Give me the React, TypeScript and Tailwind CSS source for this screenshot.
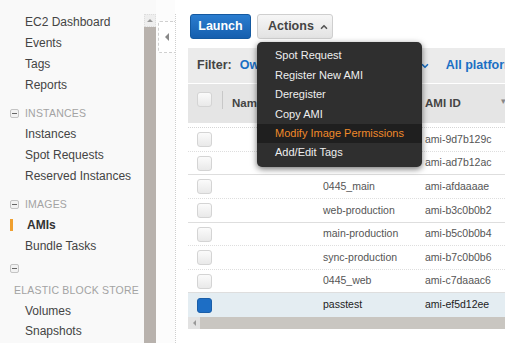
import { ChevronDown, ChevronUp } from "lucide-react"

type Row = {
  name: string
  ami: string
  h: string
  line: string
  selected?: boolean
}

const rows: Row[] = [
  { name: "", ami: "ami-9d7b129c", h: "h-[24px]", line: "border-dotted" },
  { name: "", ami: "ami-ad7b12ac", h: "h-[23px]", line: "border-solid" },
  { name: "0445_main", ami: "ami-afdaaaae", h: "h-[24px]", line: "border-dotted" },
  { name: "web-production", ami: "ami-b3c0b0b2", h: "h-[24px]", line: "border-solid" },
  { name: "main-production", ami: "ami-b5c0b0b4", h: "h-[23px]", line: "border-dotted" },
  { name: "sync-production", ami: "ami-b7c0b0b6", h: "h-[24px]", line: "border-dotted" },
  { name: "0445_web", ami: "ami-c7daaac6", h: "h-[23px]", line: "border-solid" },
  { name: "passtest", ami: "ami-ef5d12ee", h: "h-[24px]", line: "border-none", selected: true },
]

const menu = [
  "Spot Request",
  "Register New AMI",
  "Deregister",
  "Copy AMI",
  "Modify Image Permissions",
  "Add/Edit Tags",
]

const MinusBox = () => (
  <span className="flex h-[9px] w-[9px] items-center justify-center rounded-[2px] border border-[#c4c4c4] bg-[#f2f2f2]">
    <span className="h-px w-[5px] bg-[#666]" />
  </span>
)

const NavItem = ({ label }: { label: string }) => (
  <div className="flex h-[21px] items-center pl-[25px] text-[12px] text-[#444]">{label}</div>
)

const SectionHead = ({ label }: { label: string }) => (
  <div className="flex h-[19px] items-center gap-[6px] pl-[10px] text-[10.5px] tracking-[0.2px] text-[#a3a3a3]">
    <MinusBox />
    {label}
  </div>
)

const Checkbox = ({ checked }: { checked?: boolean }) =>
  checked ? (
    <span className="block h-[15px] w-[15px] rounded-[3px] border border-[#1a5ea8] bg-[#1d6ec5]" />
  ) : (
    <span className="block h-[15px] w-[15px] rounded-[3px] border border-[#d4d4d4] bg-gradient-to-b from-[#fbfbfb] to-[#e9e9e9]" />
  )

export default function App() {
  return (
    <div className="flex h-[343px] w-[505px] overflow-hidden bg-white font-['Liberation_Sans',Arial,sans-serif]">
      {/* sidebar */}
      <div className="flex w-[144px] shrink-0 flex-col bg-[#f9f9f9] pt-[11px]">
        <NavItem label="EC2 Dashboard" />
        <NavItem label="Events" />
        <NavItem label="Tags" />
        <NavItem label="Reports" />
        <div className="mt-[9px]">
          <SectionHead label="INSTANCES" />
        </div>
        <NavItem label="Instances" />
        <NavItem label="Spot Requests" />
        <NavItem label="Reserved Instances" />
        <div className="mt-[9px]">
          <SectionHead label="IMAGES" />
        </div>
        <div className="flex h-[21px] items-center">
          <span className="ml-[10px] h-[12px] w-[3px] bg-[#f0a030]" />
          <span className="pl-[14px] text-[12px] font-bold text-[#333]">AMIs</span>
        </div>
        <NavItem label="Bundle Tasks" />
        <div className="flex h-[24px] items-center pl-[10px]">
          <MinusBox />
        </div>
        <div className="flex h-[21px] items-center pl-[14px] text-[10.5px] tracking-[0.2px] text-[#a3a3a3]">
          ELASTIC BLOCK STORE
        </div>
        <div className="flex h-[20px] items-center pl-[25px] text-[12px] text-[#444]">Volumes</div>
        <div className="flex h-[20px] items-center pl-[25px] text-[12px] text-[#444]">Snapshots</div>
      </div>

      {/* sidebar scrollbar */}
      <div className="flex w-[12px] shrink-0 flex-col bg-[#f9f9f9] pt-[14px]">
        <div className="flex h-[13px] items-center justify-center border border-dotted border-[#ddd] bg-[#eeeeee]">
          <span className="h-0 w-0 border-x-[3px] border-b-[3px] border-x-transparent border-b-[#999]" />
        </div>
        <div className="flex-1 bg-[#b8b2ad]" />
      </div>

      {/* collapse tab */}
      <div className="w-[19px] shrink-0 bg-[#fcfcfc] pl-[2px] pt-[21px]">
        <div className="flex h-[32px] w-[17px] items-center justify-center rounded-l-[2px] border-y border-l border-dashed border-[#d0d0d0] bg-white">
          <span className="h-0 w-0 border-y-[4px] border-r-[4px] border-y-transparent border-r-[#888]" />
        </div>
      </div>

      {/* content */}
      <div className="relative mt-[14px] flex min-w-0 flex-1 flex-col border-l border-dotted border-[#cfcfcf] pl-[12px]">
        <div className="ml-[2px] flex h-[25px] gap-[6px]">
          <button className="w-[61px] rounded-[3px] border border-[#1459a0] bg-gradient-to-b from-[#2a7dd0] to-[#165fae] text-[12.5px] font-bold text-white">
            Launch
          </button>
          <button className="flex w-[76px] items-center gap-[5px] rounded-[3px] border border-[#cfcfcf] bg-gradient-to-b from-[#f6f6f6] to-[#e3e3e3] pl-[10px] text-[12.5px] font-bold text-[#444]">
            Actions
            <ChevronUp className="h-[10px] w-[10px] text-[#555]" strokeWidth={4} />
          </button>
        </div>

        {/* filter bar */}
        <div className="mt-[9px] flex h-[35px] items-center overflow-hidden whitespace-nowrap bg-[#ebebeb] text-[12.5px] font-bold">
          <span className="ml-[9px] shrink-0 text-[#444]">Filter:</span>
          <span className="ml-[8px] w-[17px] shrink-0 overflow-hidden text-[#1a6fc4]">Owned by me</span>
          <ChevronDown className="ml-[163px] h-[10px] w-[10px] shrink-0 text-[#1a6fc4]" strokeWidth={4} />
          <span className="ml-[16px] shrink-0 text-[#1a6fc4]">All platforms</span>
        </div>
        <div className="h-px bg-white" />

        {/* header */}
        <div className="relative flex h-[39px] items-start whitespace-nowrap bg-[#e5e5e5] pt-[8px] text-[11.5px] font-bold text-[#444]">
          <div className="ml-[9px] w-[16px] shrink-0">
            <Checkbox />
          </div>
          <span className="ml-[9px] mt-[-1px] h-[18px] w-px shrink-0 bg-[#c8c8c8]" />
          <span className="ml-[9px] mt-[3px] w-[25px] shrink-0 overflow-hidden">Name</span>
          <span className="ml-[168px] mt-[3px] shrink-0">AMI ID</span>
          <span className="ml-[40px] mt-[3px] shrink-0 text-[9px] font-normal text-[#888]">▾</span>
        </div>
        <div className="h-[5px] border-b border-dotted border-[#d6d6d6] bg-white" />

        {/* rows */}
        {rows.map((row) => (
          <div
            key={row.ami}
            className={`flex ${row.h} items-center whitespace-nowrap border-b ${row.line} border-[#dedede] text-[10.5px] ${
              row.selected ? "bg-[#e4edf2] text-[#222]" : "bg-white text-[#555]"
            }`}
          >
            <div className="ml-[9px] w-[15px] shrink-0">
              <Checkbox checked={row.selected} />
            </div>
            <span className="ml-[111px] w-[102px] shrink-0">{row.name}</span>
            <span>{row.ami}</span>
          </div>
        ))}

        {/* horizontal scrollbar */}
        <div className="flex h-[12px] bg-[#c9c6c1]">
          <div className="flex w-[12px] items-center justify-center bg-[#e2e2e2]">
            <span className="h-0 w-0 border-y-[3px] border-r-[3px] border-y-transparent border-r-[#999]" />
          </div>
        </div>
        <div className="flex-1 bg-white" />

        {/* actions dropdown */}
        <div className="absolute left-[81px] top-[28px] z-10 w-[165px] rounded-[5px] bg-[#2f2f2f] pt-[4px] shadow-[0_2px_6px_rgba(0,0,0,0.55)]">
          {menu.map((item) => (
            <div
              key={item}
              className={`flex h-[19.4px] items-center pl-[18px] text-[11px] ${
                item === "Modify Image Permissions" ? "bg-[#1f1f1f] text-[#f08a2a]" : "text-[#eeeeee]"
              }`}
            >
              {item}
            </div>
          ))}
          <div className="h-[5px]" />
        </div>
      </div>
    </div>
  )
}
